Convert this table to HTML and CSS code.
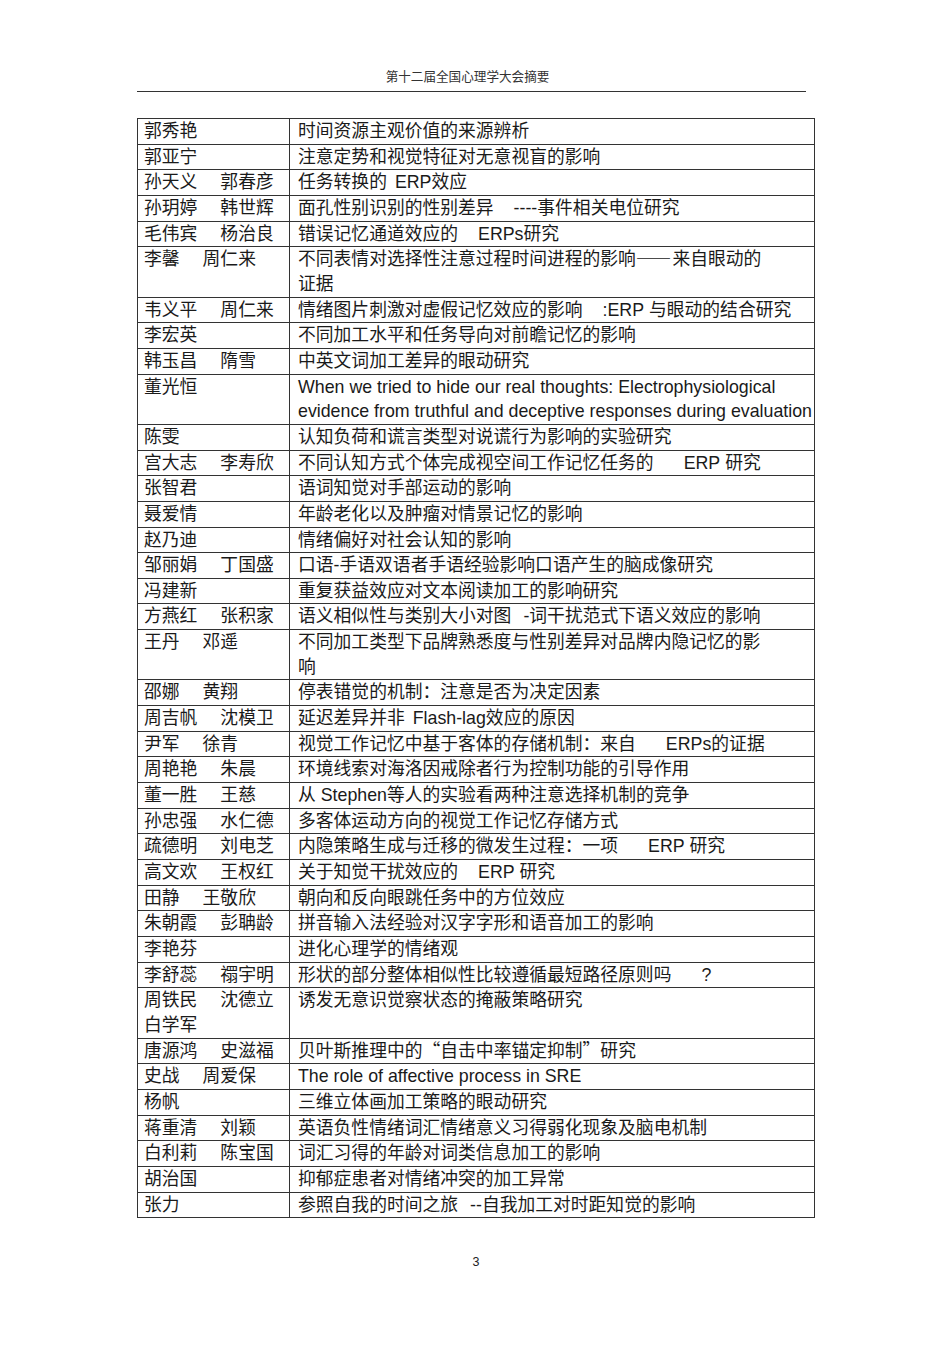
FILE: index.html
```html
<!DOCTYPE html>
<html lang="zh">
<head>
<meta charset="utf-8">
<title>第十二届全国心理学大会摘要</title>
<link rel="stylesheet" href="styles.css">
</head>
<body>
<div class="page">
  <header class="running-head">
    <div class="head-title">第十二届全国心理学大会摘要</div>
    <div class="head-rule"></div>
  </header>
  <table class="list">
    <tr><td class="au">郭秀艳</td><td class="ti">时间资源主观价值的来源辨析</td></tr>
    <tr><td class="au">郭亚宁</td><td class="ti">注意定势和视觉特征对无意视盲的影响</td></tr>
    <tr><td class="au">孙天义<span class="sp"></span>郭春彦</td><td class="ti">任务转换的<span class="g0"></span><span class="en">ERP</span>效应</td></tr>
    <tr><td class="au">孙玥婷<span class="sp"></span>韩世辉</td><td class="ti">面孔性别识别的性别差异<span class="g2"></span><span class="en">----</span>事件相关电位研究</td></tr>
    <tr><td class="au">毛伟宾<span class="sp"></span>杨治良</td><td class="ti">错误记忆通道效应的<span class="g2"></span><span class="en">ERPs</span>研究</td></tr>
    <tr><td class="au">李馨<span class="sp"></span>周仁来</td><td class="ti">不同表情对选择性注意过程时间进程的影响<span class="cjk dash">——</span>来自眼动的<br>证据</td></tr>
    <tr><td class="au">韦义平<span class="sp"></span>周仁来</td><td class="ti">情绪图片刺激对虚假记忆效应的影响<span class="g2"></span><span class="en">:ERP</span> 与眼动的结合研究</td></tr>
    <tr><td class="au">李宏英</td><td class="ti">不同加工水平和任务导向对前瞻记忆的影响</td></tr>
    <tr><td class="au">韩玉昌<span class="sp"></span>隋雪</td><td class="ti">中英文词加工差异的眼动研究</td></tr>
    <tr><td class="au">董光恒</td><td class="ti en">When we tried to hide our real thoughts: Electrophysiological<br>evidence from truthful and deceptive responses during evaluation</td></tr>
    <tr><td class="au">陈雯</td><td class="ti">认知负荷和谎言类型对说谎行为影响的实验研究</td></tr>
    <tr><td class="au">宫大志<span class="sp"></span>李寿欣</td><td class="ti">不同认知方式个体完成视空间工作记忆任务的<span class="g3"></span><span class="en">ERP</span> 研究</td></tr>
    <tr><td class="au">张智君</td><td class="ti">语词知觉对手部运动的影响</td></tr>
    <tr><td class="au">聂爱情</td><td class="ti">年龄老化以及肿瘤对情景记忆的影响</td></tr>
    <tr><td class="au">赵乃迪</td><td class="ti">情绪偏好对社会认知的影响</td></tr>
    <tr><td class="au">邹丽娟<span class="sp"></span>丁国盛</td><td class="ti">口语<span class="en">-</span>手语双语者手语经验影响口语产生的脑成像研究</td></tr>
    <tr><td class="au">冯建新</td><td class="ti">重复获益效应对文本阅读加工的影响研究</td></tr>
    <tr><td class="au">方燕红<span class="sp"></span>张积家</td><td class="ti">语义相似性与类别大小对图<span class="g1"></span><span class="en">-</span>词干扰范式下语义效应的影响</td></tr>
    <tr><td class="au">王丹<span class="sp"></span>邓遥</td><td class="ti">不同加工类型下品牌熟悉度与性别差异对品牌内隐记忆的影<br>响</td></tr>
    <tr><td class="au">邵娜<span class="sp"></span>黄翔</td><td class="ti">停表错觉的机制：注意是否为决定因素</td></tr>
    <tr><td class="au">周吉帆<span class="sp"></span>沈模卫</td><td class="ti">延迟差异并非<span class="g0"></span><span class="en">Flash-lag</span>效应的原因</td></tr>
    <tr><td class="au">尹军<span class="sp"></span>徐青</td><td class="ti">视觉工作记忆中基于客体的存储机制：来自<span class="g3"></span><span class="en">ERPs</span>的证据</td></tr>
    <tr><td class="au">周艳艳<span class="sp"></span>朱晨</td><td class="ti">环境线索对海洛因戒除者行为控制功能的引导作用</td></tr>
    <tr><td class="au">董一胜<span class="sp"></span>王慈</td><td class="ti">从 <span class="en">Stephen</span>等人的实验看两种注意选择机制的竞争</td></tr>
    <tr><td class="au">孙忠强<span class="sp"></span>水仁德</td><td class="ti">多客体运动方向的视觉工作记忆存储方式</td></tr>
    <tr><td class="au">疏德明<span class="sp"></span>刘电芝</td><td class="ti">内隐策略生成与迁移的微发生过程：一项<span class="g3"></span><span class="en">ERP</span> 研究</td></tr>
    <tr><td class="au">高文欢<span class="sp"></span>王权红</td><td class="ti">关于知觉干扰效应的<span class="g2"></span><span class="en">ERP</span> 研究</td></tr>
    <tr><td class="au">田静<span class="sp"></span>王敬欣</td><td class="ti">朝向和反向眼跳任务中的方位效应</td></tr>
    <tr><td class="au">朱朝霞<span class="sp"></span>彭聃龄</td><td class="ti">拼音输入法经验对汉字字形和语音加工的影响</td></tr>
    <tr><td class="au">李艳芬</td><td class="ti">进化心理学的情绪观</td></tr>
    <tr><td class="au">李舒蕊<span class="sp"></span>禤宇明</td><td class="ti">形状的部分整体相似性比较遵循最短路径原则吗<span class="g3"></span><span class="en">?</span></td></tr>
    <tr><td class="au">周铁民<span class="sp"></span>沈德立<br>白学军</td><td class="ti">诱发无意识觉察状态的掩蔽策略研究</td></tr>
    <tr><td class="au">唐源鸿<span class="sp"></span>史滋福</td><td class="ti">贝叶斯推理中的<span class="cjk">“</span>自击中率锚定抑制<span class="cjk">”</span>研究</td></tr>
    <tr><td class="au">史战<span class="sp"></span>周爱保</td><td class="ti en">The role of affective process in SRE</td></tr>
    <tr><td class="au">杨帆</td><td class="ti">三维立体画加工策略的眼动研究</td></tr>
    <tr><td class="au">蒋重清<span class="sp"></span>刘颖</td><td class="ti">英语负性情绪词汇情绪意义习得弱化现象及脑电机制</td></tr>
    <tr><td class="au">白利莉<span class="sp"></span>陈宝国</td><td class="ti">词汇习得的年龄对词类信息加工的影响</td></tr>
    <tr><td class="au">胡治国</td><td class="ti">抑郁症患者对情绪冲突的加工异常</td></tr>
    <tr><td class="au">张力</td><td class="ti">参照自我的时间之旅<span class="g1"></span><span class="en">--</span>自我加工对时距知觉的影响</td></tr>
  </table>
  <div class="folio">3</div>
</div>
</body>
</html>
```

FILE: styles.css
```css
html, body {
  margin: 0;
  padding: 0;
  background: #fff;
}

body {
  font-family: "Liberation Sans", "Noto Sans CJK SC", sans-serif;
  color: #1a1a1a;
}

.page {
  width: 950px;
  height: 1345px;
  padding: 68px 0 0 137px;
  box-sizing: border-box;
}

.running-head {
  width: 669px;
}

.head-title {
  text-align: center;
  font-family: "Noto Sans CJK SC", sans-serif;
  font-size: 12.6px;
  line-height: 16px;
  color: #333;
  margin-left: -8px;
}

.head-rule {
  margin-top: 7px;
  height: 1px;
  background: #333;
}

.list {
  margin-top: 26px;
  width: 678px;
  border-collapse: collapse;
  border: 1.5px solid #222;
  table-layout: fixed;
}

.list td {
  border: 1px solid #333;
  padding: 0;
  vertical-align: top;
  font-family: "Liberation Sans", "Noto Sans CJK SC", sans-serif;
  font-size: 17.8px;
  line-height: 24.65px;
  height: 24.65px;
  white-space: nowrap;
  overflow: visible;
  color: #1a1a1a;
}

.list td.au {
  width: 145px;
  padding-left: 6px;
}

.list td.ti {
  padding-left: 8px;
}

.en {
  font-family: "Liberation Sans", sans-serif;
  font-size: 17.8px;
  line-height: 1;
}

.list td.en {
  font-family: "Liberation Sans", sans-serif;
}

.cjk {
  font-family: "Noto Sans CJK SC", sans-serif;
  line-height: 1;
}

.dash {
  letter-spacing: 1px;
}

.sp {
  display: inline-block;
  width: 23px;
}

.g0 {
  display: inline-block;
  width: 8px;
}

.g1 {
  display: inline-block;
  width: 12px;
}

.g2 {
  display: inline-block;
  width: 20px;
}

.g3 {
  display: inline-block;
  width: 30px;
}

.folio {
  width: 678px;
  margin-top: 36px;
  text-align: center;
  font-size: 12.5px;
  line-height: 16px;
  color: #222;
}
```
